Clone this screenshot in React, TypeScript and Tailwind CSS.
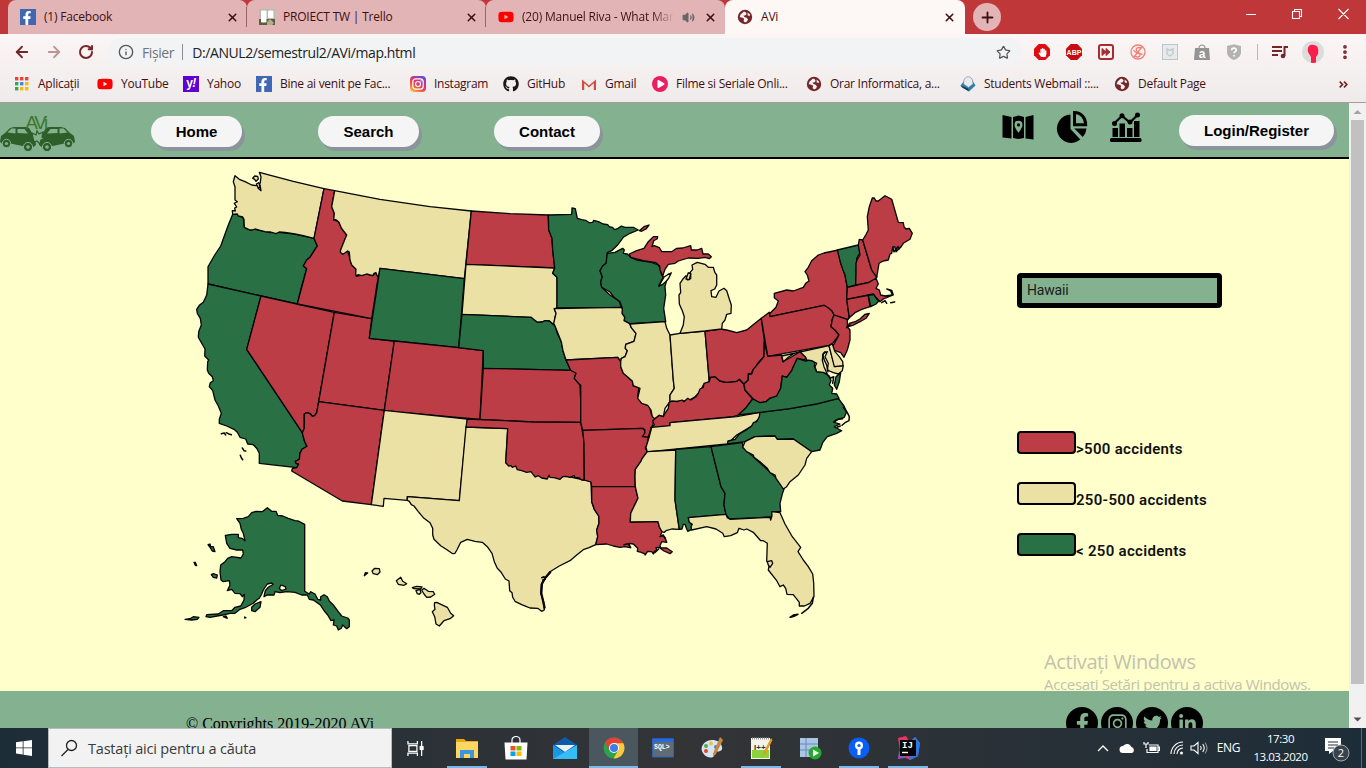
import React from 'react';
import {
  FaFacebookF, FaInstagram, FaTwitter, FaLinkedinIn, FaGithub, FaYoutube, FaPlay, FaHandPaper,
} from 'react-icons/fa';
import { ArrowLeft, ArrowRight, RotateCw, Info, Star, X, Plus, Volume2, MoreVertical } from 'lucide-react';

/* ---------- map data ---------- */

// Outlines are stored in thirds of a pixel, relative to one of six survey sheets.
const SHEETS: Record<string, [number, number]> = {
  A: [180, 160],
  B: [180, 370],
  C: [420, 180],
  D: [400, 380],
  E: [620, 180],
  F: [640, 370],
};

function outline(src: string): string {
  let sheet = SHEETS.A;
  const pts: string[] = [];
  for (const tok of src.trim().split(/\s+/)) {
    if (SHEETS[tok]) {
      sheet = SHEETS[tok];
      continue;
    }
    const [x, y] = tok.split(',').map(Number);
    pts.push(`${(sheet[0] + x / 3).toFixed(1)},${(sheet[1] + y / 3).toFixed(1)}`);
  }
  return pts.join(' ');
}

const RED = '#bd3d46';
const TAN = '#ebe1a5';
const GREEN = '#297045';
const CREAM = '#ffffcc';

const STATES: [string, string, string][] = [
  ['OR', GREEN, 'A 158,163 175,163 190,175 193,202 210,210 225,207 270,218 290,216 345,222 402,235 412,258 402,272 390,292 380,300 370,318 380,326 366,375 352,432 243,408 84,372 84,320 104,285 122,258 145,195'],
  ['WA', TAN, 'A 165,47 178,58 195,65 215,75 228,77 240,75 243,92 234,84 241,68 243,50 238,37 340,64 432,86 402,235 370,227 345,222 315,217 298,216 288,221 272,216 255,215 240,211 225,207 217,210 210,210 193,202 192,178 188,171 175,168 172,162 158,163 157,152 166,153 164,144 170,141 163,130 172,125 165,120 165,80 160,65'],
  ['CA', GREEN, 'A 84,372 243,408 200,568 B 367,188 370,200 374,215 381,229 366,238 360,250 358,268 346,274 348,280 356,282 350,293 238,280 238,250 230,235 220,224 203,222 197,207 180,202 172,187 162,178 140,168 118,160 118,148 124,130 115,108 105,90 98,62 88,50 91,38 100,32 97,20 86,10 82,0 A 83,605 86,600 74,588 75,567 68,555 55,532 56,515 64,495 61,475 52,460 50,448 58,436 70,427 80,405'],
  ['NV', RED, 'A 243,408 463,457 B 416,95 410,128 404,137 397,139 389,130 379,128 373,132 373,175 367,188 A 200,568'],
  ['UT', RED, 'A 463,457 575,476 568,535 643,543 B 613,121 416,95'],
  ['ID', RED, 'A 432,86 464,92 455,140 463,160 463,180 475,185 485,205 500,225 482,272 487,282 503,273 515,315 528,328 530,348 560,342 578,347 588,338 595,348 575,476 352,432 380,326 370,318 380,300 390,292 412,258 402,235'],
  ['MT', TAN, 'A 464,92 600,118 750,140 C 154,93 133,296 A 600,325 596,348 592,349 588,338 582,340 578,347 560,342 545,347 534,344 529,349 527,340 528,328 515,315 510,300 508,276 503,273 489,283 481,277 482,269 493,242 500,225 490,212 484,204 477,187 468,179 461,180 463,160 455,140'],
  ['WY', GREEN, 'A 600,325 C 133,296 116,503 A 643,543 568,535'],
  ['CO', RED, 'A 643,543 C 116,503 190,512 D 240,118 0,97 B 613,121'],
  ['AZ', RED, 'B 416,95 613,121 574,404 487,393 335,303 337,296 350,293 356,282 348,280 346,274 358,268 360,250 366,238 381,229 374,215 370,200 367,188 373,175 373,132 379,128 389,130 397,139 404,137 410,128'],
  ['NM', TAN, 'B 613,121 D 202,117 178,362 22,350 22,361 B 612,385 610,409 574,404'],
  ['ND', RED, 'C 154,93 270,101 385,105 386,150 396,175 398,210 404,264 138,253'],
  ['SD', TAN, 'C 138,253 404,264 398,280 411,292 411,384 403,386 408,400 404,415 402,435 388,423 375,422 367,426 352,427 340,418 333,412 126,403'],
  ['NE', GREEN, 'C 126,403 333,412 340,418 352,427 367,426 375,422 388,423 405,438 412,460 424,485 429,512 438,540 452,571 190,565 190,512 116,503'],
  ['KS', RED, 'C 190,565 452,571 460,573 468,580 463,595 480,615 482,660 D 542,127 400,126 240,118'],
  ['TX', TAN, 'D 198,141 323,146 317,248 553,300 573,306 575,365 583,388 596,408 597,430 590,450 593,470 587,494 567,503 550,509 530,525 510,542 478,558 450,575 432,600 424,612 422,640 431,665 433,690 425,694 413,685 390,684 378,679 365,674 345,664 338,652 336,638 329,632 327,603 316,597 302,575 292,565 283,545 276,520 262,500 247,487 225,484 202,478 182,487 172,508 165,520 158,521 142,510 122,497 102,478 98,465 98,445 90,428 72,415 55,395 42,378 34,374 28,364 22,361 22,350 178,362'],
  ['OK', RED, 'D 202,117 400,126 542,127 552,180 553,300 545,300 538,294 525,292 522,287 510,292 498,289 488,290 480,298 462,293 450,292 447,286 442,297 425,294 415,287 406,291 399,283 393,275 380,277 365,272 352,269 347,258 337,262 333,257 326,258 317,248 323,146 198,141'],
  ['MN', GREEN, 'C 385,105 455,103 456,84 466,86 472,115 485,119 497,121 508,128 518,127 521,121 535,125 550,132 563,134 568,140 577,142 584,149 592,146 604,138 615,142 640,142 655,150 630,160 610,172 592,196 575,212 562,218 560,250 548,258 540,272 547,290 542,305 545,322 570,345 598,364 604,382 411,384 411,292 398,280 404,264 398,210 396,175 386,150'],
  ['WI', GREEN, 'C 562,220 585,217 608,205 613,210 610,220 622,222 632,232 650,240 690,246 713,254 722,266 724,283 730,290 720,310 716,318 724,314 745,282 735,320 737,345 731,385 737,425 629,431 612,422 614,412 606,400 607,385 600,365 582,352 570,336 545,322 542,305 547,290 540,272 548,258 558,250'],
  ['IA', TAN, 'C 403,386 604,382 607,388 606,400 614,412 612,422 629,431 634,443 648,460 642,484 617,493 616,505 622,512 615,530 604,535 602,545 593,532 438,540 429,512 424,485 405,438 401,430 408,400'],
  ['MO', RED, 'C 438,540 593,532 602,545 602,560 610,580 637,603 640,618 660,622 D 717,20 713,50 725,68 748,78 755,106 765,113 758,135 752,148 745,172 727,170 735,150 728,145 548,151 542,127 542,15 C 480,615 463,595 468,580 452,571'],
  ['IL', TAN, 'E 30,432 135,425 140,445 150,465 160,600 163,625 150,645 150,665 135,685 130,710 118,706 105,716 97,710 93,690 83,676 65,670 53,655 60,625 40,617 37,603 10,580 2,560 2,545 4,535 15,530 22,512 16,505 17,493 42,484 48,460 34,443'],
  ['IN', TAN, 'E 150,465 180,460 255,453 268,605 250,615 240,635 225,650 205,662 150,665 150,645 163,625 160,600'],
  ['KY', RED, 'E 105,716 118,706 130,710 135,700 145,685 147,668 155,663 172,665 186,660 192,665 203,655 212,660 228,650 235,640 240,627 250,622 252,610 268,605 270,592 285,590 300,603 318,607 350,604 358,598 371,612 375,630 398,657 378,683 355,705 340,710 150,728 150,740 92,743 103,735 98,722'],
  ['AR', RED, 'D 548,151 728,145 733,150 735,158 727,170 745,172 742,192 736,203 742,215 727,235 722,245 706,268 705,290 706,320 575,320 573,306 553,300 552,190'],
  ['LA', RED, 'D 575,320 706,320 714,355 704,375 692,400 691,426 773,423 F 54,455 58,470 66,485 62,495 75,502 80,517 65,515 60,527 62,533 80,534 97,545 90,551 72,543 57,532 48,533 50,540 42,545 40,552 35,545 23,544 15,555 D 737,523 724,517 712,514 713,505 700,492 688,490 690,503 675,500 660,502 640,498 620,492 587,494 593,470 590,450 597,430 596,408 583,388 575,365'],
  ['TN', TAN, 'F 35,172 90,167 90,158 290,140 360,127 358,145 335,168 290,195 262,222 22,246 18,232 28,200'],
  ['MS', TAN, 'F 107,240 105,390 118,478 95,477 78,482 73,487 66,485 58,470 54,455 D 691,426 692,400 704,375 714,355 706,320 705,290 706,268 722,245 727,235 742,215'],
  ['AL', GREEN, 'F 107,238 213,230 243,350 255,370 252,405 258,433 145,443 148,455 155,465 155,478 143,484 138,472 135,463 130,463 126,477 118,478 105,390'],
  ['NC', GREEN, 'F 360,127 450,116 510,104 595,85 612,108 620,125 613,142 587,150 583,157 600,162 583,170 605,182 590,190 562,200 548,218 540,240 515,245 460,207 412,208 405,198 345,200 315,215 262,222 264,213 285,208 298,192 318,181 335,168 340,158 350,155 358,140'],
  ['GA', GREEN, 'F 213,230 308,218 308,232 340,260 405,320 432,357 427,372 420,400 422,425 395,425 396,437 388,450 392,441 268,447 258,433 252,405 255,370 243,350'],
  ['SC', TAN, 'F 315,215 345,200 405,198 412,208 460,207 515,245 500,265 495,285 475,315 450,335 440,350 430,357 420,342 408,325 405,315 390,308 382,295 360,275 342,262 340,255 320,245 308,232'],
  ['FL', TAN, 'F 145,443 258,433 262,443 270,448 390,442 392,450 396,437 395,425 420,428 435,462 457,500 482,532 474,545 490,570 505,590 518,612 521,640 522,680 510,700 493,708 478,708 478,697 460,674 441,673 437,655 430,645 420,650 410,632 385,600 388,585 380,573 382,520 370,512 362,512 340,487 320,477 312,480 297,475 292,488 272,497 253,500 248,490 228,477 200,470 155,480 153,470 157,463 148,457'],
  ['OH', RED, 'E 255,453 300,447 320,450 350,458 380,450 405,430 424,415 433,480 432,530 422,540 412,552 405,567 398,570 395,582 385,582 385,600 372,612 358,598 350,604 318,607 300,603 285,590 270,592 268,605'],
  ['MI', TAN, 'E 180,460 190,435 193,410 187,392 178,372 177,345 182,338 180,310 188,298 198,287 203,300 212,296 212,280 208,280 218,268 216,255 232,247 255,253 265,262 280,262 285,278 290,285 290,315 284,327 273,332 275,350 288,352 297,333 312,325 320,332 328,357 334,375 333,400 320,403 315,420 307,430 305,447 255,453'],
  ['MI-UP', RED, 'E 28,222 50,212 72,205 85,185 100,170 113,170 112,176 101,182 96,200 103,197 118,203 125,215 155,215 170,205 188,204 212,197 214,210 232,210 245,205 249,222 265,222 274,230 268,236 255,232 235,235 205,234 175,243 165,250 145,253 135,268 128,288 120,270 119,258 108,248 70,242 32,232'],
  ['ISLE', RED, 'E 58,152 72,140 87,135 78,147 65,154'],
  ['NY', RED, 'E 448,402 468,382 475,363 463,353 463,340 500,330 520,333 550,322 557,310 567,303 562,285 555,275 565,262 575,242 595,225 612,219 655,210 662,250 668,265 675,285 682,322 680,358 688,413 684,419 642,405 635,392 624,383 612,376 450,410'],
  ['LI', RED, 'E 684,440 688,430 705,425 720,417 735,403 748,400 738,415 720,425 698,436'],
  ['PA', RED, 'E 424,415 448,397 450,410 612,376 624,383 635,392 642,405 637,418 633,440 645,450 657,465 640,488 627,496 443,529'],
  ['VT', GREEN, 'E 652,210 715,195 720,218 710,235 707,315 682,322 675,285 668,268 662,250'],
  ['NH', RED, 'E 715,195 718,178 728,180 755,270 770,290 768,297 745,308 707,315 708,280 708,250 712,238 720,225'],
  ['ME', RED, 'E 728,180 737,165 745,150 742,110 748,80 757,54 763,54 768,63 775,63 795,47 815,58 835,127 850,128 852,140 858,147 868,145 877,160 870,178 850,190 842,202 828,215 824,200 818,202 815,220 810,222 805,240 790,243 777,250 770,292 755,270'],
  ['MA', RED, 'E 682,322 745,308 768,295 775,312 768,325 778,330 782,345 795,348 817,345 812,333 800,327 815,331 820,345 790,357 780,365 768,352 760,342 680,358'],
  ['CT', RED, 'E 680,358 745,346 750,380 725,388 705,398 688,413'],
  ['RI', GREEN, 'E 745,346 762,344 768,355 776,363 768,372 752,380'],
  ['NJ', RED, 'E 642,405 682,418 682,440 690,450 690,480 682,510 672,532 662,518 640,510 637,500 645,487 657,465 645,450 633,440 637,418'],
  ['WV', RED, 'E 433,485 443,529 485,525 488,545 515,530 540,515 557,532 555,540 532,535 520,560 515,572 500,592 487,588 482,625 470,648 450,655 438,665 415,670 398,655 375,630 372,612 385,600 385,582 395,582 400,568 432,530'],
  ['VA', GREEN, 'E 355,705 378,683 398,657 420,668 438,665 450,655 470,648 482,625 487,588 500,592 515,572 520,560 532,535 555,543 570,540 585,547 583,560 590,575 612,578 628,588 633,602 628,615 638,625 635,640 650,642 657,655 590,672 510,686 420,697'],
  ['MD', TAN, 'E 485,528 627,497 645,560 670,557 667,572 655,582 640,578 622,570 625,550 615,530 622,515 610,520 607,540 612,560 622,583 610,577 590,575 585,560 590,550 575,542 560,540 557,532 540,515 520,522 505,532 490,545'],
  ['DE', TAN, 'E 627,497 637,492 645,515 658,530 668,545 669,557 643,560'],
  ['VA-E', GREEN, 'E 648,590 662,578 658,605 650,628 643,615'],
  ['AK', GREEN, 'B 170,446 190,445 205,440 215,428 228,424 247,425 262,413 275,424 288,424 293,436 308,438 325,445 345,452 355,453 374,463 374,664 388,672 392,665 405,672 413,688 422,690 422,680 432,674 442,680 448,693 460,705 475,725 485,738 503,744 508,750 508,770 500,776 488,765 484,775 475,780 470,768 460,765 462,750 453,752 443,735 433,723 422,706 400,690 388,688 382,675 365,675 345,667 320,665 300,668 285,665 282,675 262,675 252,680 256,662 265,652 280,643 275,639 262,642 250,660 245,672 238,685 230,690 220,700 195,713 180,718 165,730 150,730 128,735 90,742 78,740 80,734 115,732 130,722 155,722 165,712 182,708 192,690 193,673 187,680 180,671 165,670 155,658 142,662 150,645 148,632 130,635 123,630 120,605 122,585 135,575 143,565 155,560 183,564 190,552 188,540 170,540 150,535 140,520 136,496 155,493 175,493 175,503 186,505 195,512 190,490 184,478 180,460'],
  ['AK-K', GREEN, 'B 215,712 225,702 243,695 240,712 225,725 215,722'],
  ['AK-1', GREEN, 'B 15,748 30,746 40,740 57,742 52,748 35,750'],
  ['AK-2', GREEN, 'B 84,524 90,522 92,530 100,530 105,545 97,543 92,535'],
  ['AK-3', GREEN, 'B 94,614 100,611 112,615 110,624 100,622'],
  ['AK-4', GREEN, 'B 42,577 46,577 50,587 46,586'],
  ['AK-5', GREEN, 'B 130,740 138,738 142,745'],
  ['AK-6', GREEN, 'B 194,741 198,743 194,744'],
  ['HI-1', TAN, 'B 553,617 556,608 563,609'],
  ['HI-2', TAN, 'B 576,603 584,595 598,596 600,606 592,614 580,611'],
  ['HI-3', TAN, 'B 649,632 662,622 668,634 680,641 672,646 655,643'],
  ['HI-4', TAN, 'D 37,623 50,619 66,621 62,627 42,626'],
  ['HI-5', TAN, 'D 48,632 60,628 63,638 58,643 52,641'],
  ['HI-6', TAN, 'D 65,630 72,625 85,634 100,635 104,643 92,651 80,652 72,642'],
  ['HI-7', TAN, 'D 104,668 110,667 142,682 152,700 161,707 150,716 132,722 118,738 108,732 104,710 97,695 105,688 103,675'],
];

const INSETS: [string, string][] = [
  [CREAM, 'B 298,655 303,645 316,650 318,657 305,662'],
  [TAN, 'A 218,55 224,48 233,49 235,57 228,64 224,58'],
  [TAN, 'A 229,72 237,68 240,83 234,82'],
  [TAN, 'F 382,575 395,572 398,580 390,592 385,585'],
  [TAN, 'E 198,297 205,278 212,282 208,299'],
  [CREAM, 'E 117,318 126,302 133,290 154,278 146,295 137,305 128,313'],
];

const COAST_LINES = [
  'B 124,191 133,189 137,195', 'B 139,188 145,191 154,194', 'B 187,234 192,242 197,243', 'B 181,256 184,263 188,269',
  'D 450,575 436,592 425,610 423,640 433,685', 'D 452,577 437,594 427,612 425,640 435,683', 'D 425,593 432,590 436,598 428,600',
  'F 610,112 622,128 628,140 627,152 615,158 606,166', 'F 520,682 517,700 505,715 485,730', 'F 450,742 460,735 474,733 462,739 452,742',
  'E 785,368 795,362 800,370', 'E 812,368 824,366',
  'D 672,494 684,491 692,503', 'F 60,500 70,495 75,505', 'F 56,537 44,548',
  'E 818,202 822,215 834,200 838,206', 'E 615,515 608,525 613,540 620,555 624,575', 'E 622,583 630,595 641,590 638,610',
  'E 680,443 690,435', 'E 641,726 655,718 668,716', 'E 651,742 661,738',
];

const UsMap = () => (
  <svg viewBox="180 160 740 480" className="h-[480px] w-[740px] shrink-0" strokeLinejoin="round" strokeLinecap="round">
    <g stroke="#050505" strokeWidth="1.3">
      {STATES.map(([id, fill, src]) => (
        <polygon key={id} fill={fill} points={outline(src)} />
      ))}
      {INSETS.map(([fill, src]) => (
        <polygon key={src} fill={fill} points={outline(src)} />
      ))}
      {COAST_LINES.map((l) => (
        <polyline key={l} fill="none" strokeWidth="1.5" points={outline(l)} />
      ))}
    </g>
  </svg>
);

/* ---------- small icons ---------- */

const FbTile = () => (
  <span className="flex h-4 w-4 shrink-0 items-end justify-end bg-[#4267b2] pr-[2px] text-white">
    <FaFacebookF size={14} />
  </span>
);

const GlobeIcon = () => (
  <svg viewBox="0 0 16 16" className="h-4 w-4 shrink-0">
    <circle cx="8" cy="8" r="7.2" fill="#74272a" />
    <path d="M7 2.6 3.6 5.4 2.6 8.2 5 8.6 7.2 9.8 6.6 12 8 13.4 10 12.6 11 10.4 9.6 8.8 7.4 8 6.4 6.6 8.2 6.6 9.6 5 9 3.4z" fill="#fdf5f4" />
    <path d="M10.6 3.6 13 5.6 12.6 7.2 10.6 6.2z" fill="#fdf5f4" />
  </svg>
);

const YtIcon = () => <FaYoutube size={16} color="#ff0000" className="shrink-0" />;

const TrelloFav = () => (
  <svg viewBox="0 0 16 16" className="h-4 w-4 shrink-0">
    <rect width="16" height="16" fill="#b9bbb0" />
    <path d="M0 10h16v6H0z" fill="#5d5b43" />
    <path d="M8 13l3-3 4 4-2 2H8z" fill="#b3ae8a" />
    <rect x="2" y="1.500" width="5.500" height="12" rx="1" fill="#fff" />
    <rect x="9" y="1.500" width="5.500" height="7.500" rx="1" fill="#fff" />
  </svg>
);

const AppsIcon = () => (
  <svg viewBox="0 0 14 14" className="h-[14px] w-[14px] shrink-0">
    {['#ea4335', '#ea4335', '#ea4335', '#34a853', '#4285f4', '#fbbc05', '#34a853', '#fbbc05', '#fbbc05'].map((c, i) => (
      <rect key={i} x={(i % 3) * 5} y={Math.floor(i / 3) * 5} width="3.4" height="3.4" fill={c} />
    ))}
  </svg>
);

const YahooIcon = () => (
  <span className="flex h-4 w-4 shrink-0 items-center justify-center bg-[#5f01d1] pb-[2px] font-['Liberation_Sans',sans-serif] text-[12px] font-bold leading-none tracking-[-0.5px] text-white">
    y<i>!</i>
  </span>
);

const InstaIcon = () => (
  <svg viewBox="0 0 16 16" className="h-4 w-4 shrink-0">
    <defs>
      <linearGradient id="ig" x1="0.1" y1="1" x2="0.8" y2="0">
        <stop offset="0" stopColor="#fdc452" />
        <stop offset="0.35" stopColor="#f2583b" />
        <stop offset="0.65" stopColor="#cf2f8c" />
        <stop offset="1" stopColor="#5a4fd0" />
      </linearGradient>
    </defs>
    <rect width="16" height="16" rx="4" fill="url(#ig)" />
    <rect x="2.8" y="2.8" width="10.4" height="10.4" rx="3" fill="none" stroke="#fff" strokeWidth="1.2" />
    <circle cx="8" cy="8" r="2.5" fill="none" stroke="#fff" strokeWidth="1.2" />
    <circle cx="11.1" cy="4.9" r="0.7" fill="#fff" />
  </svg>
);

const GmailIcon = () => (
  <svg viewBox="0 0 16 16" className="h-4 w-4 shrink-0">
    <path d="M1 3h14v11H1z" fill="#ececec" />
    <path d="M1 14V3.4l7 6 7-6V14h-2.2V7.2L8 11.6 3.2 7.2V14z" fill="#d54b3d" />
  </svg>
);

const MailboxIcon = () => (
  <svg viewBox="0 0 16 16" className="h-4 w-4 shrink-0">
    <path d="M.5 9.500 4 5l8-1 3.500 5.500L9 15.500z" fill="#2a7fae" />
    <path d="M.5 9.500 8 12.500l1 3-7-4z" fill="#153b55" />
    <path d="M3.500 8C3.500 3 5.500.8 8.500.8S13 4 13 8l-4.500 3.500z" fill="#e8ebed" stroke="#6a7780" strokeWidth="0.6" />
  </svg>
);

const PlayIcon = () => (
  <span className="flex h-4 w-4 shrink-0 items-center justify-center rounded-full bg-[#ea1e63] pl-[2px] text-white">
    <FaPlay size={8} />
  </span>
);

/* ---------- browser chrome ---------- */

const Tab = ({ icon, label, active, sound, divider }: { icon: React.ReactNode; label: string; active?: boolean; sound?: boolean; divider?: boolean }) => (
  <div
    className={`flex h-[34px] items-center rounded-t-lg pl-3 text-[12px] text-[#3f0f12] ${
      active ? 'w-[240px] bg-[#fdf7f6] pr-[9px]' : 'w-[239px] bg-[#e3b4b6] pr-[8px]'
    }`}
  >
    {icon}
    <span className={`ml-2 min-w-0 flex-1 whitespace-nowrap tracking-[-0.2px] ${sound ? 'bg-gradient-to-r from-[#3f0f12] from-85% to-[#e3b4b6] bg-clip-text text-transparent' : ''}`}>{label}</span>
    {sound && <Volume2 size={13} className="ml-2 mr-[9px] shrink-0 fill-[#666] text-[#666]" />}
    <X size={13} strokeWidth={2.8} className="shrink-0" />
    {divider && <span className="-mr-[8px] ml-[7px] h-5 w-px bg-[#9b6567]" />}
  </div>
);

const TabStrip = () => (
  <div className="flex h-[34px] shrink-0 bg-[#bf3739]">
    <div className="flex pl-2">
      <Tab icon={<FbTile />} label="(1) Facebook" divider />
      <Tab icon={<TrelloFav />} label="PROIECT TW | Trello" divider />
      <Tab icon={<YtIcon />} label="(20) Manuel Riva - What Mar" sound />
      <Tab icon={<GlobeIcon />} label="AVi" active />
    </div>
    <div className="ml-2 mt-[3px] flex h-7 w-7 items-center justify-center rounded-full bg-[#e3b4b6] text-[#3f0f12]">
      <Plus size={17} strokeWidth={2.6} />
    </div>
    <svg viewBox="0 0 104 12" className="ml-auto mr-[17px] mt-[8px] h-3 w-[104px]" fill="none" stroke="#fff" strokeWidth="1.1">
      <path d="M1 6.5h10M47.500 3.500h7v7h-7zM49.500 3.500v-2h7v7h-2M93.500 1l10 10M103.500 1l-10 10" />
    </svg>
  </div>
);

const OCTAGON = 'M4.700 0h6.600L16 4.700v6.600L11.300 16H4.700L0 11.300V4.700z';

const Toolbar = () => (
  <div className="flex h-9 items-center pl-[13px] text-[#74272a]">
    <ArrowLeft size={18} strokeWidth={2.4} />
    <ArrowRight size={18} strokeWidth={2.4} className="ml-[14px] opacity-45" />
    <RotateCw size={16} strokeWidth={3} className="ml-[15px]" />
    <div className="ml-[14px] flex h-7 w-[914px] items-center rounded-full bg-[#f1f3f5] pl-[10px] pr-[11px] text-[14px] text-[#222]">
      <Info size={16} className="text-[#555]" />
      <span className="ml-2 tracking-[-0.4px] text-[#70757a]">Fișier</span>
      <span className="ml-2 mr-[9px] h-4 w-px bg-[#8a8d90]" />
      <span className="tracking-[-0.4px]">D:/ANUL2/semestrul2/AVi/map.html</span>
      <Star size={15} className="ml-auto text-[#555]" />
    </div>
    <div className="ml-[12px] flex w-[208px] items-center justify-between">
      <span className="grid h-4 w-4 place-items-center text-white">
        <svg viewBox="0 0 16 16" className="col-start-1 row-start-1 h-4 w-4"><path d={OCTAGON} fill="#e00c12" /></svg>
        <FaHandPaper size={9} className="col-start-1 row-start-1" />
      </span>
      <svg viewBox="0 0 16 16" className="h-4 w-4"><path d={OCTAGON} fill="#c70d12" /><text x="8" y="10.600" textAnchor="middle" fontFamily="Liberation Sans, sans-serif" fontSize="7" fontWeight="bold" fill="#fff">ABP</text></svg>
      <svg viewBox="0 0 16 16" className="h-4 w-4"><rect x="1" y="1" width="14" height="14" rx="2" fill="none" stroke="#a82c2e" strokeWidth="2" /><path d="M4 4.5 8 8l-4 3.5zM8 4.5 12 8l-4 3.5z" fill="#a82c2e" stroke="#a82c2e" /></svg>
      <svg viewBox="0 0 16 16" className="h-4 w-4" fill="none" stroke="#ef7f76" strokeWidth="1.3"><circle cx="8" cy="8" r="7" /><path d="M11.5 4.5C9 2.5 5 4 6.5 6.5S11 9 10 11.5 6 13 4.5 11.5M3.500 6c2 3 6 4 9 4M4 13 12 3" /></svg>
      <svg viewBox="0 0 16 16" className="h-4 w-4"><rect x="0.5" y="0.5" width="15" height="15" fill="#e7eaec" stroke="#bfc6ca" /><path d="M5 5l3 1.5L11 5v5l-3 2-3-2z" fill="none" stroke="#c3c9cd" strokeWidth="1.4" /></svg>
      <svg viewBox="0 0 16 16" className="h-4 w-4"><path d="M1 4h14l1 12H0z" fill="#949494" /><path d="M5 4a3 3 0 016 0" fill="none" stroke="#949494" strokeWidth="1.2" /><text x="8" y="13.500" textAnchor="middle" fontFamily="Liberation Sans, sans-serif" fontSize="12" fontWeight="bold" fill="#fff">a</text></svg>
      <svg viewBox="0 0 16 16" className="h-4 w-4"><path d="M1 2 8 .2 15 2v6c0 4-3 6.500-7 8-4-1.500-7-4-7-8z" fill="#b3b3b3" /><path d="M5.700 6.200C5.700 3.400 10.300 3.500 10.300 6c0 1.600-2.300 1.700-2.300 3.300M8 11v1.600" fill="none" stroke="#fff" strokeWidth="1.7" /></svg>
    </div>
    <span className="ml-[15px] h-4 w-px bg-[#cdb0b1]" />
    <svg viewBox="0 0 16 14" className="ml-[14px] h-[14px] w-4" fill="none" stroke="#74272a" strokeWidth="2"><path d="M0 2h10M0 6h10M0 10h6M12.500 11V2H16" /><circle cx="11" cy="11" r="2.300" fill="#74272a" stroke="none" /></svg>
    <span className="ml-[14px] flex h-[22px] w-[22px] items-end justify-center overflow-hidden rounded-full bg-[#dcdcdc]">
      <svg viewBox="0 0 22 22" className="h-[22px] w-[22px]"><path d="M6 11C5 5 8 3 11.5 4 16 4 17 8 16 13l-2 3v6H9v-6z" fill="#fb1e4b" /></svg>
    </span>
    <MoreVertical size={18} strokeWidth={3} className="ml-[12px]" />
  </div>
);

const Bookmark = ({ w, icon, label, gap }: { w: string; icon: React.ReactNode; label: string; gap?: string }) => (
  <div className={`flex shrink-0 items-center whitespace-nowrap ${w}`}>
    {icon}
    <span className={gap ?? 'ml-2'}>{label}</span>
  </div>
);

const Bookmarks = () => (
  <div className="flex h-7 items-center pl-[15px] text-[12px] tracking-[-0.27px] text-[#3f0f12]">
    <Bookmark w="w-[82px]" icon={<AppsIcon />} label="Aplicații" gap="ml-[9px]" />
    <Bookmark w="w-[86px]" icon={<YtIcon />} label="YouTube" />
    <Bookmark w="w-[73px]" icon={<YahooIcon />} label="Yahoo" />
    <Bookmark w="w-[154px]" icon={<FbTile />} label="Bine ai venit pe Fac..." />
    <Bookmark w="w-[93px]" icon={<InstaIcon />} label="Instagram" />
    <Bookmark w="w-[78px]" icon={<FaGithub size={16} color="#191717" />} label="GitHub" />
    <Bookmark w="w-[71px]" icon={<GmailIcon />} label="Gmail" />
    <Bookmark w="w-[154px]" icon={<PlayIcon />} label="Filme si Seriale Onli..." />
    <Bookmark w="w-[154px]" icon={<GlobeIcon />} label="Orar Informatica, a..." />
    <Bookmark w="w-[154px]" icon={<MailboxIcon />} label="Students Webmail ::..." />
    <Bookmark w="w-[120px]" icon={<GlobeIcon />} label="Default Page" />
    <svg viewBox="0 0 9 7" className="ml-auto mr-[18px] h-[7px] w-[9px]" fill="none" stroke="#74272a" strokeWidth="1.700"><path d="M.7.700 3.500 3.500.7 6.300M5 .7l2.800 2.800L5 6.300" /></svg>
  </div>
);

/* ---------- site ---------- */

const Pill = ({ children, className }: { children: React.ReactNode; className: string }) => (
  <button className={`flex h-[31px] items-center justify-center rounded-full bg-[#f5f5f5] pt-px font-['Liberation_Sans',Arial,sans-serif] text-[15px] font-bold text-black shadow-[3px_4px_0_#8a949b] ${className}`}>
    {children}
  </button>
);

const Car = () => (
  <g>
    <path d="M0 28l1-6 4-3 5-5 4-1h12l3 1 3 5 3 4 1 8-4 3-24-5-5 1z" fill="#2f5f28" />
    <path d="M7.500 18.500l4-4h4v5zM17.500 15h7l3.500 4.500-10.500-.5z" fill="#84b190" />
    <circle cx="6.500" cy="29.500" r="4.200" fill="#2f5f28" stroke="#84b190" strokeWidth="1" />
    <circle cx="6.500" cy="29.500" r="1.600" fill="#84b190" />
    <circle cx="28" cy="33" r="4.600" fill="#2f5f28" stroke="#84b190" strokeWidth="1" />
    <circle cx="28" cy="33" r="1.800" fill="#84b190" />
  </g>
);

const Logo = () => (
  <svg viewBox="0 0 76 40" className="h-10 w-[76px]">
    <Car />
    <g transform="translate(75 0) scale(-1 1)"><Car /></g>
    <path d="M33 24l-1-5 4 2 1-4 2 3 4-2-1 5 2 2-3 1-1 4-3-3-3 1z" fill="#84b190" stroke="#2f5f28" strokeWidth="1.200" />
    <text x="25.500" y="14.500" fontFamily="Liberation Sans, sans-serif" fontSize="18.500" letterSpacing="-2.200" fill="#3d762b">AVi</text>
  </svg>
);

const MapIcon = () => (
  <svg viewBox="0 0 32 26" className="h-[26px] w-8">
    <path d="M.5 1l9 2v21.500l-9-1zM31.500 1l-8 2v21.500l8 1zM11 3l5.500-1.500L22 3v21l-5.500 1L11 24z" />
    <path d="M16.500 6.700a4 4 0 00-4 4c0 3 4 8 4 8s4-5 4-8a4 4 0 00-4-4zm0 5.800a1.600 1.600 0 110-3.200 1.600 1.600 0 010 3.200z" fill="#84b190" />
  </svg>
);

const PieIcon = () => (
  <svg viewBox="0 0 32 32" className="h-8 w-8">
    <path d="M14.500 3.500A14.200 14.200 0 1024.300 28.500L14.500 18z" />
    <path d="M18.500 1.500v12.200h11.200C29.700 7 25 1.500 18.500 1.500z" fill="none" stroke="#000" strokeWidth="3" />
    <path d="M18.200 17.500h12.300A14 14 0 0126.800 26z" />
  </svg>
);

const ChartIcon = () => (
  <svg viewBox="0 0 32 30" className="h-[30px] w-8">
    <rect y="26" width="31.5" height="4" rx="1.5" />
    <path d="M2.500 16H8v9H2.500zM9.500 11.500H15V25H9.500zM17 16h5.500v9H17zM24 9h5.500v16H24z" />
    <path d="M4.500 11 12 4l8 6.500 7.500-7.500" fill="none" stroke="#000" strokeWidth="2.200" />
    <circle cx="4.5" cy="11.500" r="2.500" /><circle cx="12" cy="3.800" r="2.500" /><circle cx="20" cy="10" r="2.500" /><circle cx="27.5" cy="3" r="2.500" />
  </svg>
);

const SiteHeader = () => (
  <header className="flex h-14 shrink-0 border-b-2 border-black bg-[#84b190]">
    <div className="mt-[11px]"><Logo /></div>
    <Pill className="ml-[75px] mt-[13px] w-[91px]">Home</Pill>
    <Pill className="ml-[76px] mt-[13px] w-[101px]">Search</Pill>
    <Pill className="ml-[75px] mt-[13px] w-[106px]">Contact</Pill>
    <div className="ml-auto mr-[15px] flex">
      <div className="mt-[11px]"><MapIcon /></div>
      <div className="ml-[22px] mt-[8px]"><PieIcon /></div>
      <div className="ml-[22px] mt-[9px]"><ChartIcon /></div>
      <Pill className="ml-[37px] mt-3 w-[155px]">Login/Register</Pill>
    </div>
  </header>
);

const LegendRow = ({ swatch, label }: { swatch: string; label: string }) => (
  <div className="flex h-[51px] items-start">
    <span className={`h-[23px] w-[59px] rounded-[4px] border-2 border-black ${swatch}`} />
    <span className="mt-[9px] whitespace-pre font-[Roboto,sans-serif] text-[15px] font-semibold leading-[18px] tracking-[0.3px] text-[#111]">{label}</span>
  </div>
);

const Social = ({ children }: { children: React.ReactNode }) => (
  <span className="flex h-8 w-8 items-center justify-center rounded-full bg-black text-[#84b190]">{children}</span>
);

const Site = () => (
  <div className="flex min-h-0 flex-1 flex-col overflow-hidden">
    <SiteHeader />
    <main className="flex h-[532px] shrink-0 bg-[#ffffcc] pl-[180px] pt-px">
      <UsMap />
      <aside className="ml-[97px] flex flex-col whitespace-nowrap">
        <div className="mt-[113px] flex h-[35px] w-[205px] shrink-0 items-center rounded-[4px] border-[5px] border-black bg-[#84b190] pl-[5px] font-[Roboto,sans-serif] text-[14px] tracking-[-0.2px] text-[#1b1b1b]">
          Hawaii
        </div>
        <div className="mt-[123px] h-[153px] shrink-0">
          <LegendRow swatch="bg-[#bd3d46]" label=">500 accidents" />
          <LegendRow swatch="bg-[#ebe1a5]" label="250-500 accidents" />
          <LegendRow swatch="bg-[#297045]" label="< 250 accidents" />
        </div>
        <div className="ml-[27px] mt-[64px] text-[#c2c2ad]">
          <div className="text-[20px] leading-[28px] tracking-[-0.4px]">Activați Windows</div>
          <div className="text-[15px] leading-[16px] tracking-[-0.35px]">Accesați Setări pentru a activa Windows.</div>
        </div>
      </aside>
    </main>
    <footer className="flex h-[37px] shrink-0 overflow-hidden bg-[#84b190] pl-[186px]">
      <span className="mt-[23px] w-[880px] font-['Liberation_Serif',serif] text-[16px] leading-[20px] text-black">© Copyrights 2019-2020 AVi</span>
      <div className="mt-4 flex gap-[3px]">
        <Social><FaFacebookF size={21} /></Social>
        <Social><FaInstagram size={21} /></Social>
        <Social><FaTwitter size={19} /></Social>
        <Social><FaLinkedinIn size={19} /></Social>
      </div>
    </footer>
  </div>
);

const Scrollbar = () => (
  <div className="flex w-[17px] flex-col items-center bg-[#f1f1f1]">
    <svg viewBox="0 0 17 17" className="h-[17px] w-[17px]"><path d="M4.5 11 8.500 7l4 4z" fill="#a3a3a3" /></svg>
    <div className="h-[564px] w-[13px] bg-[#c1c1c1]" />
    <svg viewBox="0 0 17 17" className="mt-auto h-[17px] w-[17px]"><path d="M4.5 6.500h8l-4 4z" fill="#505050" /></svg>
  </div>
);

/* ---------- taskbar ---------- */

const Slot = ({ children, running, focused }: { children: React.ReactNode; running?: boolean; focused?: boolean }) => (
  <div className={`flex h-10 w-[49px] flex-col items-center ${focused ? 'bg-[#4b575e]' : ''}`}>
    <div className="flex flex-1 items-center pt-px">
      <svg viewBox="0 0 24 24" className="h-6 w-6">{children}</svg>
    </div>
    <div className={`h-[2px] ${running ? 'bg-[#76b9ed]' : ''} ${focused ? 'w-full' : 'w-10'}`} />
  </div>
);

const Taskbar = () => (
  <div className="flex h-10 shrink-0 bg-gradient-to-r from-[#1d2d38] via-[#333436] to-[#1d2d38] font-['Open_Sans','Noto_Sans',sans-serif] text-white">
    <div className="flex w-12 items-center justify-center">
      <svg viewBox="0 0 16 16" className="h-4 w-4" fill="#fff"><path d="M0 2.300 6.700 1.300v6.200H0zM7.500 1.200 16 0v7.500H7.500zM0 8.300h6.700v6.300L0 13.600zM7.500 8.300H16V16l-8.500-1.200z" /></svg>
    </div>
    <div className="flex w-[344px] items-center border border-[#b9bcbe] bg-[#f2f2f2] pl-3 text-[14.5px] text-[#3a3a3a]">
      <svg viewBox="0 0 18 18" className="h-[18px] w-[18px]" fill="none" stroke="#222" strokeWidth="1.3"><circle cx="10.5" cy="6.5" r="5" /><path d="M7 10.5.5 17" /></svg>
      <span className="ml-[9px] pt-px tracking-[-0.2px]">Tastați aici pentru a căuta</span>
    </div>
    <div className="flex w-[50px] items-center justify-center pr-1">
      <svg viewBox="0 0 18 18" className="h-[17px] w-[17px]" fill="none" stroke="#fff" strokeWidth="1.3"><path d="M1 1v3h10V1M2 6h8.500v6H2zM1 17v-3h10v3M15.500 1v16" /><path d="M14 7h3v3h-3z" fill="#fff" /></svg>
    </div>
    <Slot running>
      <path d="M1 3h8l2 2h12v17H1z" fill="#e8a915" /><path d="M1 6h22v16H1z" fill="#ffd662" /><path d="M5 22v-8h14v8h-4v-4H9v4z" fill="#3b97dc" />
    </Slot>
    <Slot>
      <path d="M8 7V4a4 3.500 0 018 0v3" fill="none" stroke="#fff" strokeWidth="1.2" /><path d="M.5 6.500h23l-1 17h-21z" fill="#fff" />
      <path d="M6.500 10h5v4.500h-5z" fill="#f25022" /><path d="M12.500 10h5v4.500h-5z" fill="#7fba00" /><path d="M6.500 15.500h5V20h-5z" fill="#00a4ef" /><path d="M12.500 15.500h5V20h-5z" fill="#ffb900" />
    </Slot>
    <Slot>
      <path d="M0 9 12 1l12 8v13H0z" fill="#0c5cad" /><path d="M2 9h20l-10 7z" fill="#eaf3fa" /><path d="M0 9l12 8-10 6H0z" fill="#1b96e4" /><path d="M24 9v14H0z" fill="#36bdf3" />
    </Slot>
    <Slot running focused>
      <circle cx="12" cy="12" r="10.500" fill="#2ba24c" /><path d="M3 6.500 8 15l4-3V7.500h9.500A10.500 10.500 0 003 6.500z" fill="#e24335" /><path d="M12 7.200h9.300A10.500 10.500 0 0111.500 22.500L16.500 14z" fill="#fcca3c" /><circle cx="12" cy="12" r="5" fill="#fff" /><circle cx="12" cy="12" r="4" fill="#3e7de8" />
    </Slot>
    <Slot>
      <path d="M1.5 3h21v18h-21z" fill="#5f6c78" stroke="#335fb1" /><path d="M1.5 2.500h21V6h-21z" fill="#2468e2" /><text x="3" y="12.500" fontFamily="Liberation Mono, monospace" fontSize="6.500" fontWeight="bold" fill="#fff">SQL&gt;</text>
    </Slot>
    <Slot>
      <path d="M12 4C4 4-1 12 3 17c3 5 8 5 10 4s-1-4 2-5 8 0 7-5-5-7-10-7z" fill="#d5e6f2" /><circle cx="6" cy="15" r="2" fill="#e04434" /><circle cx="6" cy="10" r="2" fill="#50ad4b" /><circle cx="11" cy="7.5" r="2" fill="#f3c231" /><circle cx="16" cy="11" r="2" fill="#3f84d3" /><path d="M20 1l3 3-7 14-3 3 1-6z" fill="#c98544" />
    </Slot>
    <Slot running>
      <path d="M2 2h19v21H2z" fill="#f3f3e8" /><path d="M3 14h17v8H3z" fill="#8bd33b" /><path d="M3 2.500h17" stroke="#999" strokeDasharray="1 1" strokeWidth="2" /><text x="5" y="14" fontFamily="Liberation Sans, sans-serif" fontSize="8" fontWeight="bold" fill="#333">I++</text><path d="M22 2l1.500 2-7 14-3 2 1-4z" fill="#e49b23" />
    </Slot>
    <Slot>
      <path d="M2 2h18v19H2z" fill="#aac5e5" /><path d="M2 8h18M2 14h18M8 2v19" stroke="#678cb8" strokeWidth="1" /><circle cx="17" cy="17" r="6.5" fill="#27a931" /><path d="M15 13.500l6 3.500-6 3.500z" fill="#fff" />
    </Slot>
    <Slot running>
      <circle cx="12" cy="12" r="10.500" fill="#095ef4" /><circle cx="12" cy="9.500" r="4" fill="#fff" /><path d="M10.500 12h3v7h-3z" fill="#fff" /><circle cx="12" cy="9.500" r="1.600" fill="#095ef4" />
    </Slot>
    <Slot running>
      <path d="M2 2l8-2 4 6 5-5 5 6-2 13-8 4-6-3-6 2 2-8z" fill="#ec3366" /><path d="M14 6l5-5 5 6-2 13-8 4z" fill="#247ce8" /><path d="M2 23l1-8 9 4-3 3z" fill="#8654b4" /><path d="M4 4h16v16H4z" fill="#050505" /><text x="6" y="12" fontFamily="Liberation Mono, monospace" fontSize="9" fontWeight="bold" fill="#fff">IJ</text><path d="M6 16.500h6" stroke="#fff" strokeWidth="1.400" />
    </Slot>
    <div className="ml-auto flex items-center text-[12px]">
      <svg viewBox="0 0 12 8" className="h-2 w-3" fill="none" stroke="#fff" strokeWidth="1.4"><path d="M1 7l5-5 5 5" /></svg>
      <svg viewBox="0 0 16 12" className="ml-[10px] h-3 w-4"><path d="M4 11a3.500 3.500 0 010-7 5 5 0 018.500 1A3.200 3.200 0 0113 11z" fill="#fff" /></svg>
      <svg viewBox="0 0 17 14" className="ml-2 h-[14px] w-[17px]" fill="none" stroke="#fff" strokeWidth="1.2"><path d="M6 4h9v7.500H4V8M15 6h1.500v3.500H15M1 1v2h4V1M3 3v4" /><path d="M7 6h6v3.500H7z" fill="#fff" /></svg>
      <svg viewBox="0 0 14 14" className="ml-[10px] h-[14px] w-[14px]" fill="none" stroke="#fff" strokeWidth="1.1"><path d="M1 13A12 12 0 0113 1M4 13a9 9 0 019-9M7 13a6 6 0 016-6" /><circle cx="11.500" cy="12" r="1.500" fill="#fff" stroke="none" /></svg>
      <svg viewBox="0 0 18 14" className="ml-[6px] h-[14px] w-[18px]" fill="none" stroke="#fff" strokeWidth="1.1"><path d="M1 5h3l4-3.500v11L4 9H1zM10.500 5q1.500 2 0 4M12.700 3q3 4 0 8" /><path d="M15 1.500q4 5.500 0 11" opacity=".5" /></svg>
      <span className="ml-[9px] tracking-[-0.4px]">ENG</span>
      <div className="ml-[13px] w-[55px] text-center text-[11.5px] leading-[18px] tracking-[-0.45px]">
        <div>17:30</div>
        <div>13.03.2020</div>
      </div>
      <svg viewBox="0 0 26 24" className="ml-[17px] mt-1 h-6 w-[26px]"><path d="M0 0h16v13H8l-4 3v-3H0z" fill="#fff" /><path d="M3 4h10M3 7h10M3 10h6" stroke="#25303a" /><circle cx="16" cy="15" r="8" fill="#39434b" stroke="#a3a9ad" /><text x="16" y="19" textAnchor="middle" fontFamily="Open Sans, sans-serif" fontSize="11" fill="#fff">2</text></svg>
      <span className="ml-[10px] mr-1 h-10 w-px bg-[#62696e]" />
    </div>
  </div>
);

export default function App() {
  return (
    <div className="flex h-[768px] w-[1366px] flex-col overflow-hidden font-['Open_Sans','Noto_Sans',sans-serif]">
      <TabStrip />
      <div className="h-[69px] shrink-0 border-b border-[#a69a9a] bg-gradient-to-b from-[#fbf6f5] to-[#efebea]">
        <Toolbar />
        <Bookmarks />
      </div>
      <div className="flex min-h-0 flex-1">
        <Site />
        <Scrollbar />
      </div>
      <Taskbar />
    </div>
  );
}
